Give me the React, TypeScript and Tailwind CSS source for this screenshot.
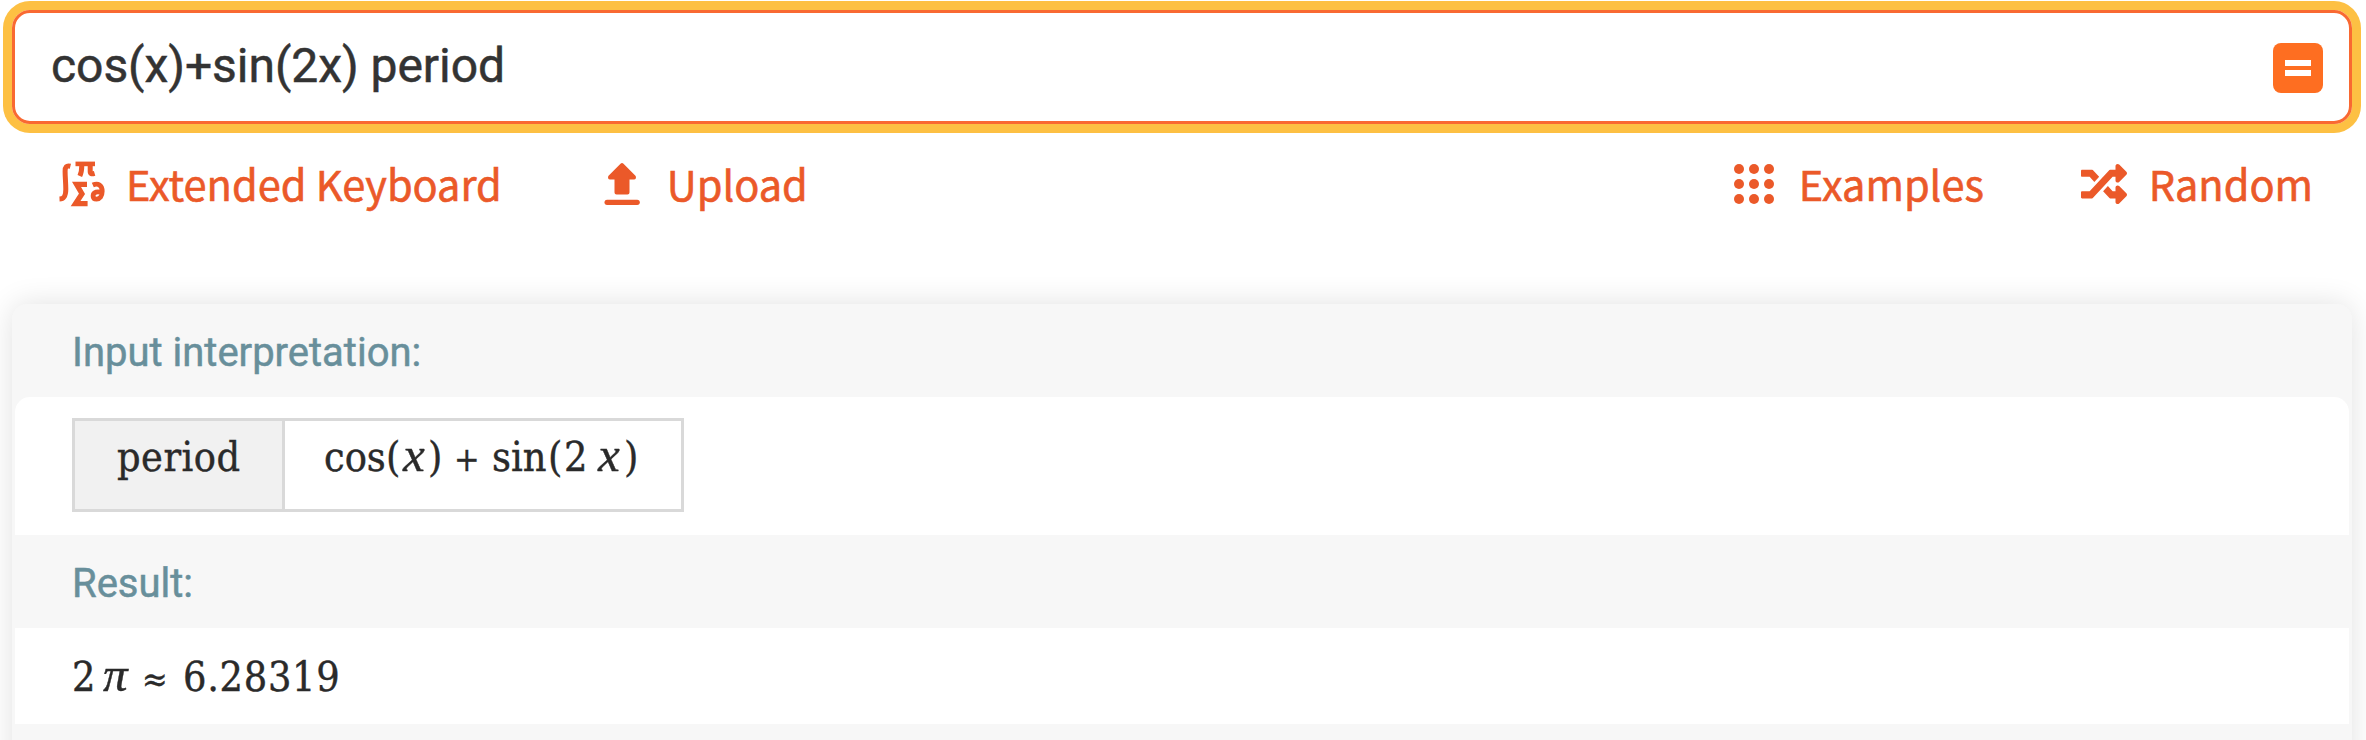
import type { ReactNode } from "react";
import { FaRandom } from "react-icons/fa";

const serif =
  "font-['DejaVu_Serif_Condensed','DejaVu_Serif',serif] [font-stretch:condensed] text-[41px] text-[#2a2a2a] whitespace-nowrap [-webkit-text-stroke:0.4px_#2a2a2a]";
const variable = "font-['Liberation_Serif',serif] text-[49px]";

function KeyboardIcon() {
  return (
    <svg width="48" height="48" viewBox="58 160 48 48" fill="none" stroke="currentColor">
      <path d="M69.400 166.200c-4-1-5.300.7-5.300 5 0 5.500.700 12 .700 18 0 6.500-1.400 9.600-6.300 9.800" strokeWidth="5" />
      <path d="M74.500 163.900h19.500" strokeWidth="4.600" />
      <path d="M80.800 165c0 4-.300 7.500-2 11" strokeWidth="5" />
      <path d="M89.200 165v6.500c0 2.300 1.300 2.700 4.400 1.800" strokeWidth="5" />
      <path d="M86 184.300H75.500L81 193.800 74.500 203.700H86.600" strokeWidth="5.200" />
      <path d="M91.800 185c5.400-2.500 9.400.3 9.400 6.300 0 5-2.400 7.800-5.600 7.800-2.300 0-3.500-1.300-3.500-3.200 0-4 5-5 8.600-3" strokeWidth="4.800" />
    </svg>
  );
}

function UploadIcon() {
  return (
    <svg width="36" height="44" viewBox="604 162 36 44" fill="currentColor">
      <path d="M620.500 163.700q1.500-1.300 3 0l12.200 12.200q1 3.200-1.700 3.600h-4.500v13q0 2-2 2h-11q-2 0-2-2v-13H610q-2.700-.400-1.700-3.600z" />
      <rect x="604.500" y="199.700" width="35.300" height="5.200" rx="2.600" />
    </svg>
  );
}

function GridIcon() {
  return (
    <svg width="40" height="40" viewBox="0 0 40 40" fill="currentColor">
      {[5, 20, 35].map((y) => [5, 20, 35].map((x) => <circle key={`${x}-${y}`} cx={x} cy={y} r="5" />))}
    </svg>
  );
}

function Tool({ icon, gap, children }: { icon: ReactNode; gap: string; children: ReactNode }) {
  return (
    <a className={`flex h-[60px] items-center ${gap}`}>
      {icon}
      <span className="mb-[2px] whitespace-nowrap leading-[58px] [-webkit-text-stroke:0.6px_currentColor]">{children}</span>
    </a>
  );
}

function PodTitle({ children }: { children: ReactNode }) {
  return (
    <h2 className="h-[93px] bg-[#f7f7f7] pl-[60px] pt-[2px] text-[40px] leading-[93px] text-[#688f9b] [-webkit-text-stroke:0.5px_currentColor]">
      {children}
    </h2>
  );
}

export default function App() {
  return (
    <div className="h-[740px] w-[2366px] overflow-hidden bg-white px-3 pt-[10px] font-['Roboto',sans-serif]">
      <div className="mr-[2px] flex h-[114px] items-center justify-between rounded-[18px] border-[3px] border-[#f96932] pl-9 pr-[26px] shadow-[0_0_0_9px_#fdc043]">
        <span className="mb-[2px] text-[48px] leading-[60px] tracking-[-0.05px] text-[#333] [-webkit-text-stroke:0.5px_#333]">
          cos(x)+sin(2x) period
        </span>
        <button className="mt-[2px] flex h-[50px] w-[50px] flex-col items-center justify-center gap-1 rounded-lg bg-[#fe6e21]">
          <span className="h-[6px] w-[26px] bg-white" />
          <span className="h-[6px] w-[26px] bg-white" />
        </button>
      </div>

      <nav className="mt-[30px] flex h-[60px] justify-between pl-[47px] pr-[41px] font-['Noto_Sans_CJK_SC',sans-serif] text-[41.500px] text-[#eb5929]">
        <div className="flex gap-[102px]">
          <Tool gap="gap-[19px]" icon={<KeyboardIcon />}>Extended Keyboard</Tool>
          <Tool gap="gap-[27px]" icon={<UploadIcon />}>Upload</Tool>
        </div>
        <div className="flex gap-[97px]">
          <Tool gap="gap-[25px]" icon={<GridIcon />}>Examples</Tool>
          <Tool gap="gap-[22px]" icon={<FaRandom size={46} />}>Random</Tool>
        </div>
      </nav>

      <main className="mr-[2px] mt-[90px] h-[500px] overflow-visible rounded-t-[15px] bg-[#f7f7f7] shadow-[0_0_30px_rgba(0,0,0,0.12)]">
        <section>
          <div className="overflow-hidden rounded-t-[15px]">
            <PodTitle>Input interpretation:</PodTitle>
          </div>
          <div className="mx-[3px] h-[138px] rounded-t-[15px] bg-white pl-[57px] pt-[21px]">
            <div className={`flex h-[94px] w-[612px] border-[3px] border-[#d9d9d9] leading-[72px] ${serif}`}>
              <div className="w-[210px] border-r-[3px] border-[#d9d9d9] bg-[#f1f1f1] pl-[42px] tracking-[0.5px]">period</div>
              <div className="flex items-baseline pl-[39px] leading-[68px]">
                <span className="w-[62px]">cos</span>
                <span className="w-[17px]">(</span>
                <i className={`w-[25px] ${variable}`}>x</i>
                <span className="w-[26px]">)</span>
                <span className="w-[38px] text-[34px]">+</span>
                <span className="w-[56px]">sin</span>
                <span className="w-[16px]">(</span>
                <span className="w-[34px]">2</span>
                <i className={`w-[26px] ${variable}`}>x</i>
                <span>)</span>
              </div>
            </div>
          </div>
        </section>
        <section>
          <PodTitle>Result:</PodTitle>
          <div className={`mx-[3px] flex h-24 items-baseline bg-white pl-[57px] leading-[94px] ${serif}`}>
            <span className="w-[31px]">2</span>
            <i className={`w-[39px] ${variable}`}>π</i>
            <span className="w-[41px] text-[34px]">≈</span>
            <span className="tracking-[0.700px]">6.28319</span>
          </div>
        </section>
      </main>
    </div>
  );
}
